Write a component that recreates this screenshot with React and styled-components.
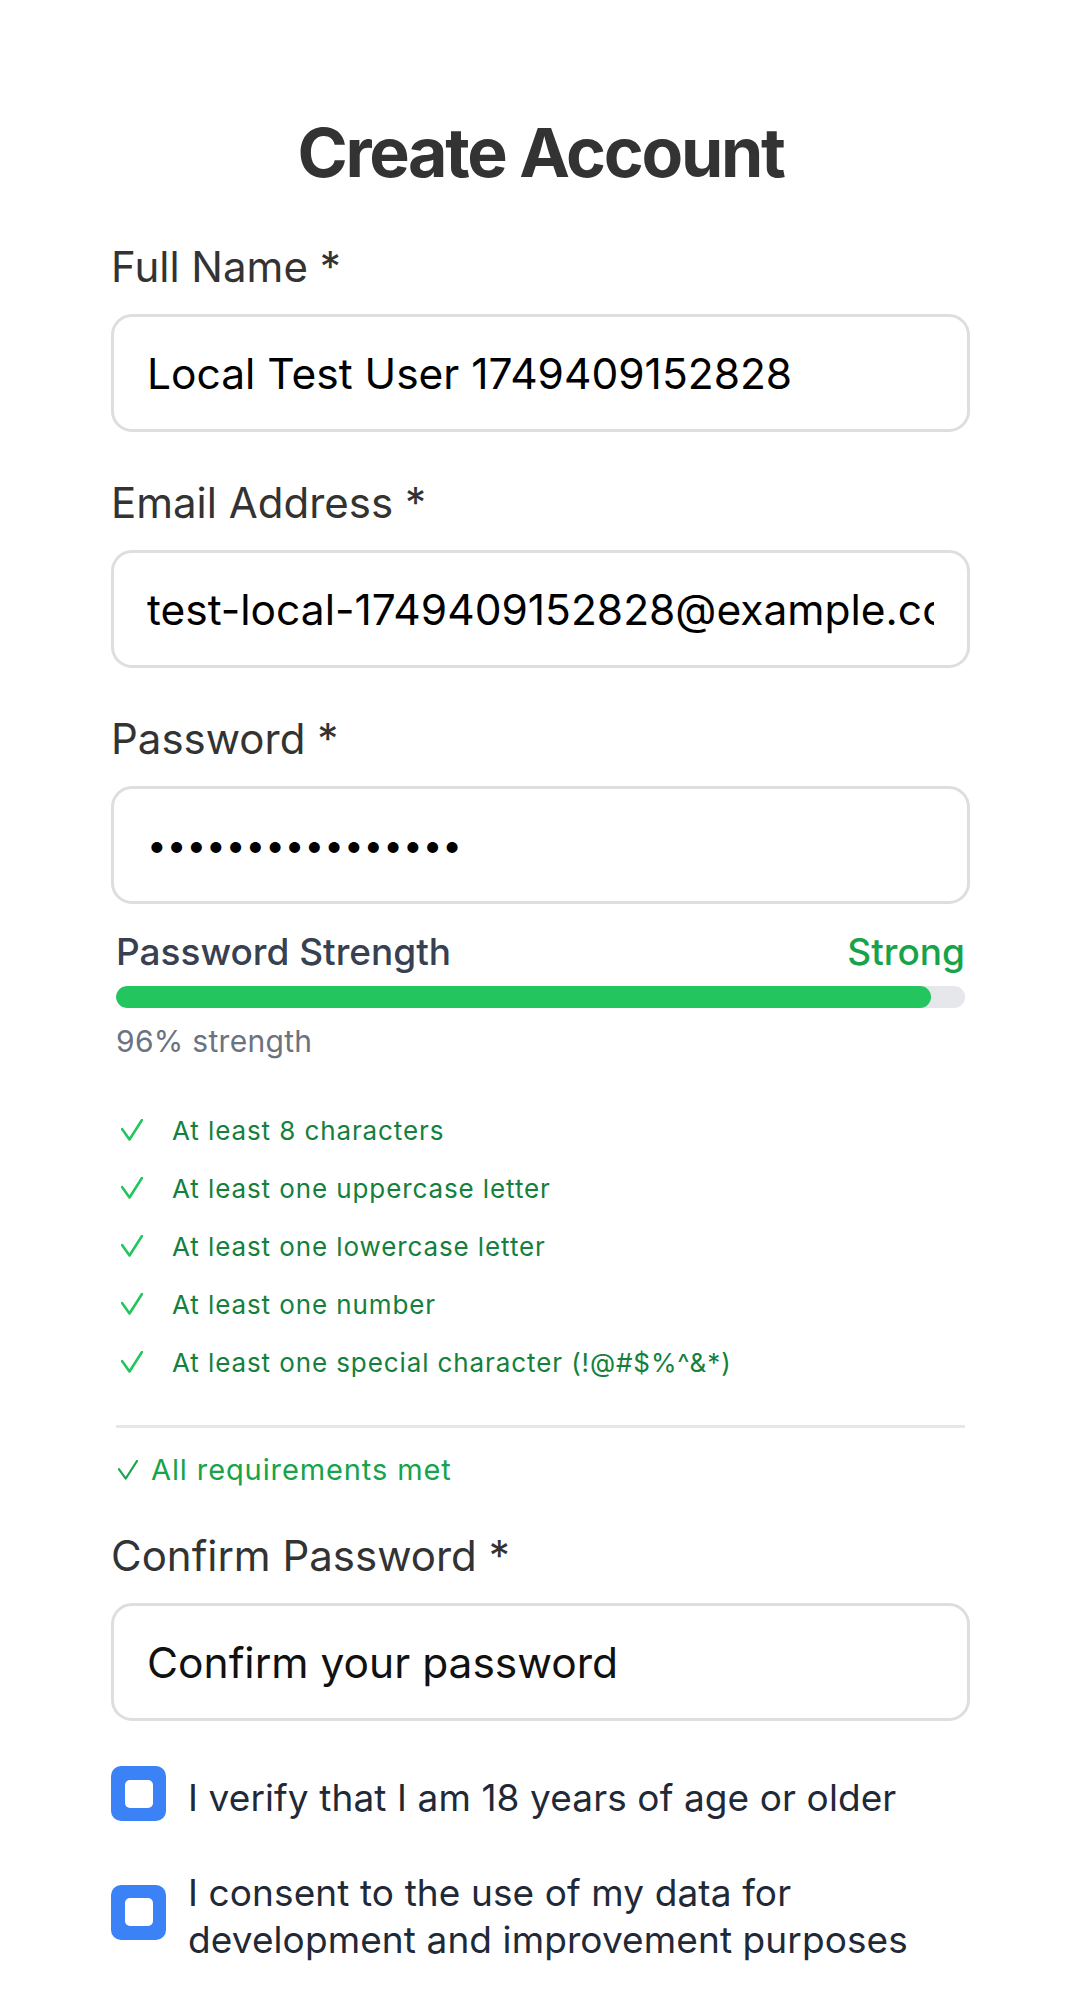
import React from "react";
import styled, { createGlobalStyle } from "styled-components";

const Global = createGlobalStyle`
  html, body { margin: 0; padding: 0; background: #ffffff; }
  body { font-family: Inter, "Noto Sans", "Liberation Sans", sans-serif; -webkit-font-smoothing: antialiased; }
  * { box-sizing: border-box; }
`;

const Page = styled.main`
  width: 1081px;
  padding: 108px 111px 0 111px;
`;

const Title = styled.h1`
  margin: 0 0 45px 0;
  font-size: 68px;
  line-height: 88px;
  font-weight: 700;
  color: #333333;
  text-align: center;
  letter-spacing: -2.3px;
`;

const Form = styled.form`
  display: flex;
  flex-direction: column;
`;

const Field = styled.div`
  display: flex;
  flex-direction: column;
  gap: 21px;
  margin-bottom: ${(p) => p.$mb ?? 45}px;
`;

const Label = styled.label`
  font-size: 42px;
  line-height: 52px;
  font-weight: 400;
  color: #333333;
`;

const Input = styled.input`
  width: 100%;
  height: 118px;
  border: 3px solid #dedede;
  border-radius: 21px;
  padding: 0 33px;
  font-family: inherit;
  font-size: ${(p) => (p.type === "password" && p.defaultValue ? 35 : 42.5)}px;
  color: #000000;
  background: #ffffff;
  outline: none;
  &::placeholder { color: #111111; opacity: 1; font-size: 42.5px; }
`;

const Strength = styled.div`
  margin: 0 5px;
  display: flex;
  flex-direction: column;
`;

const StrengthHead = styled.div`
  display: flex;
  justify-content: space-between;
  align-items: baseline;
  font-size: 37px;
  line-height: 44px;
  margin-bottom: 12px;
`;

const StrengthTitle = styled.span`
  color: #374151;
  font-weight: 500;
`;

const StrengthLevel = styled.span`
  color: #16a34a;
  font-weight: 500;
`;

const Track = styled.div`
  height: 22px;
  border-radius: 11px;
  background: #e5e7eb;
  overflow: hidden;
`;

const Fill = styled.div`
  height: 100%;
  border-radius: 11px;
  background: #22c55e;
`;

const Percent = styled.div`
  margin-top: 14px;
  font-size: 30px;
  line-height: 38px;
  letter-spacing: 0.3px;
  color: #6b7280;
`;

const ReqList = styled.ul`
  list-style: none;
  margin: 41px 0 34px 0;
  padding: 0 0 0 5px;
`;

const ReqItem = styled.li`
  display: flex;
  align-items: center;
  gap: 29px;
  height: 58px;
  font-size: 26px;
  letter-spacing: 0.9px;
  color: ${(p) => (p.$met ? "#15803d" : "#6b7280")};
`;

const Divider = styled.hr`
  margin: 0;
  border: none;
  height: 3px;
  background: #e5e7eb;
`;

const AllMet = styled.div`
  margin-top: 24px;
  padding-left: 2px;
  display: flex;
  align-items: center;
  gap: 13px;
  font-size: 29px;
  line-height: 36px;
  letter-spacing: 0.9px;
  color: #16a34a;
`;

const CheckRow = styled.label`
  display: flex;
  align-items: center;
  gap: 22px;
  margin-bottom: 40px;
  cursor: pointer;
`;

const Box = styled.span`
  flex: 0 0 55px;
  width: 55px;
  height: 55px;
  border-radius: 10px;
  background: #3b82f6;
  display: flex;
  align-items: center;
  justify-content: center;
  &::after {
    content: "";
    width: 28px;
    height: 28px;
    border-radius: 5px;
    background: #ffffff;
  }
`;

const CheckText = styled.span`
  font-size: 37px;
  line-height: 47px;
  letter-spacing: 0.1px;
  color: #1f2937;
  padding-top: 8px;
`;

const Tick = ({ size = 22, color = "#22c55e", w = 2.6 }) => (
  <svg width={size} height={size} viewBox="0 0 22 22" fill="none">
    <polyline points="1,10 8.5,20.5 21,1" stroke={color} strokeWidth={w} strokeLinecap="round" strokeLinejoin="round" />
  </svg>
);

const requirements = [
  "At least 8 characters",
  "At least one uppercase letter",
  "At least one lowercase letter",
  "At least one number",
  "At least one special character (!@#$%^&*)",
];

export default function App() {
  return (
    <>
      <Global />
      <Page>
        <Title>Create Account</Title>
        <Form onSubmit={(e) => e.preventDefault()}>
          <Field>
            <Label>Full Name *</Label>
            <Input type="text" defaultValue="Local Test User 1749409152828" />
          </Field>
          <Field>
            <Label>Email Address *</Label>
            <Input type="email" defaultValue="test-local-1749409152828@example.com" />
          </Field>
          <Field $mb={26}>
            <Label>Password *</Label>
            <Input type="password" defaultValue="Aa1!aaaaaaaaaaaa" />
          </Field>
          <Strength>
            <StrengthHead>
              <StrengthTitle>Password Strength</StrengthTitle>
              <StrengthLevel>Strong</StrengthLevel>
            </StrengthHead>
            <Track>
              <Fill style={{ width: "96%" }} />
            </Track>
            <Percent>96% strength</Percent>
            <ReqList>
              {requirements.map((r) => (
                <ReqItem key={r} $met>
                  <Tick />
                  <span>{r}</span>
                </ReqItem>
              ))}
            </ReqList>
            <Divider />
            <AllMet>
              <Tick size={20} color="#16a34a" w={2.2} />
              <span>All requirements met</span>
            </AllMet>
          </Strength>
          <Field style={{ marginTop: 42 }}>
            <Label>Confirm Password *</Label>
            <Input type="password" placeholder="Confirm your password" />
          </Field>
          <CheckRow>
            <Box />
            <CheckText>I verify that I am 18 years of age or older</CheckText>
          </CheckRow>
          <CheckRow>
            <Box />
            <CheckText>
              I consent to the use of my data for development and improvement purposes
            </CheckText>
          </CheckRow>
        </Form>
      </Page>
    </>
  );
}
